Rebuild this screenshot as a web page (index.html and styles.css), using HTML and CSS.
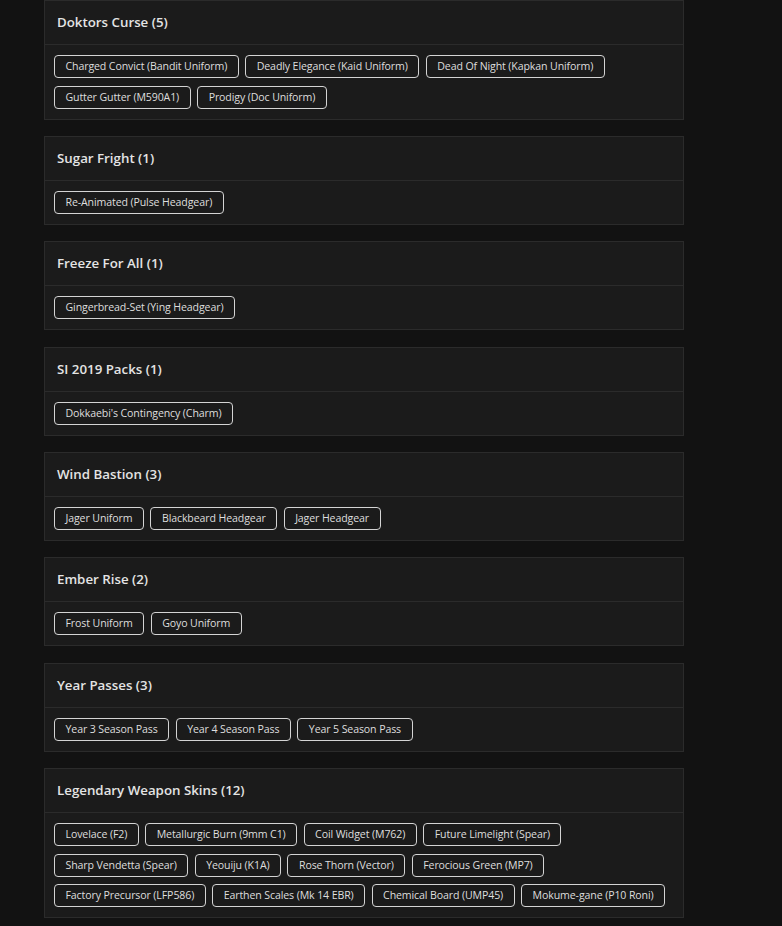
FILE: index.html
```html
<!DOCTYPE html>
<html>
<head>
<meta charset="utf-8">
<link rel="stylesheet" href="styles.css">
</head>
<body>
<div class="list">
  <section class="card">
    <header class="card-head">Doktors Curse (5)</header>
    <div class="card-body">
      <span class="tag">Charged Convict (Bandit Uniform)</span>
      <span class="tag">Deadly Elegance (Kaid Uniform)</span>
      <span class="tag">Dead Of Night (Kapkan Uniform)</span>
      <span class="tag">Gutter Gutter (M590A1)</span>
      <span class="tag">Prodigy (Doc Uniform)</span>
    </div>
  </section>
  <section class="card">
    <header class="card-head">Sugar Fright (1)</header>
    <div class="card-body">
      <span class="tag">Re-Animated (Pulse Headgear)</span>
    </div>
  </section>
  <section class="card">
    <header class="card-head">Freeze For All (1)</header>
    <div class="card-body">
      <span class="tag">Gingerbread-Set (Ying Headgear)</span>
    </div>
  </section>
  <section class="card">
    <header class="card-head">SI 2019 Packs (1)</header>
    <div class="card-body">
      <span class="tag">Dokkaebi's Contingency (Charm)</span>
    </div>
  </section>
  <section class="card">
    <header class="card-head">Wind Bastion (3)</header>
    <div class="card-body">
      <span class="tag">Jager Uniform</span>
      <span class="tag">Blackbeard Headgear</span>
      <span class="tag">Jager Headgear</span>
    </div>
  </section>
  <section class="card">
    <header class="card-head">Ember Rise (2)</header>
    <div class="card-body">
      <span class="tag">Frost Uniform</span>
      <span class="tag">Goyo Uniform</span>
    </div>
  </section>
  <section class="card">
    <header class="card-head">Year Passes (3)</header>
    <div class="card-body">
      <span class="tag">Year 3 Season Pass</span>
      <span class="tag">Year 4 Season Pass</span>
      <span class="tag">Year 5 Season Pass</span>
    </div>
  </section>
  <section class="card">
    <header class="card-head">Legendary Weapon Skins (12)</header>
    <div class="card-body">
      <span class="tag">Lovelace (F2)</span>
      <span class="tag">Metallurgic Burn (9mm C1)</span>
      <span class="tag">Coil Widget (M762)</span>
      <span class="tag">Future Limelight (Spear)</span>
      <span class="tag">Sharp Vendetta (Spear)</span>
      <span class="tag">Yeouiju (K1A)</span>
      <span class="tag">Rose Thorn (Vector)</span>
      <span class="tag">Ferocious Green (MP7)</span>
      <span class="tag">Factory Precursor (LFP586)</span>
      <span class="tag">Earthen Scales (Mk 14 EBR)</span>
      <span class="tag">Chemical Board (UMP45)</span>
      <span class="tag">Mokume-gane (P10 Roni)</span>
    </div>
  </section>
</div>
</body>
</html>
```

FILE: styles.css
```css
html, body {
  margin: 0;
  padding: 0;
  background: #121212;
}
body {
  font-family: "Open Sans", "Liberation Sans", sans-serif;
  color: #e2e2e2;
}
.list {
  width: 640px;
  margin-left: 44px;
  display: flex;
  flex-direction: column;
  gap: 16.35px;
}
.card {
  background: #1b1b1b;
  border: 1px solid #2b2b2b;
  box-sizing: border-box;
}
.card-head {
  height: 43px;
  line-height: 43px;
  padding: 0 12px;
  border-bottom: 1px solid #2b2b2b;
  font-size: 13.3px;
  font-weight: 600;
  color: #e4e4e4;
}
.card-body {
  padding: 10px 9px 10px 9px;
  display: flex;
  flex-wrap: wrap;
  column-gap: 6.5px;
  row-gap: 7.6px;
}
.tag {
  box-sizing: border-box;
  height: 23px;
  line-height: 21px;
  padding: 0 10.5px;
  border: 1px solid #d4d4d4;
  border-radius: 4px;
  font-size: 10.6px;
  letter-spacing: -0.12px;
  color: #dedede;
  white-space: nowrap;
}
```
